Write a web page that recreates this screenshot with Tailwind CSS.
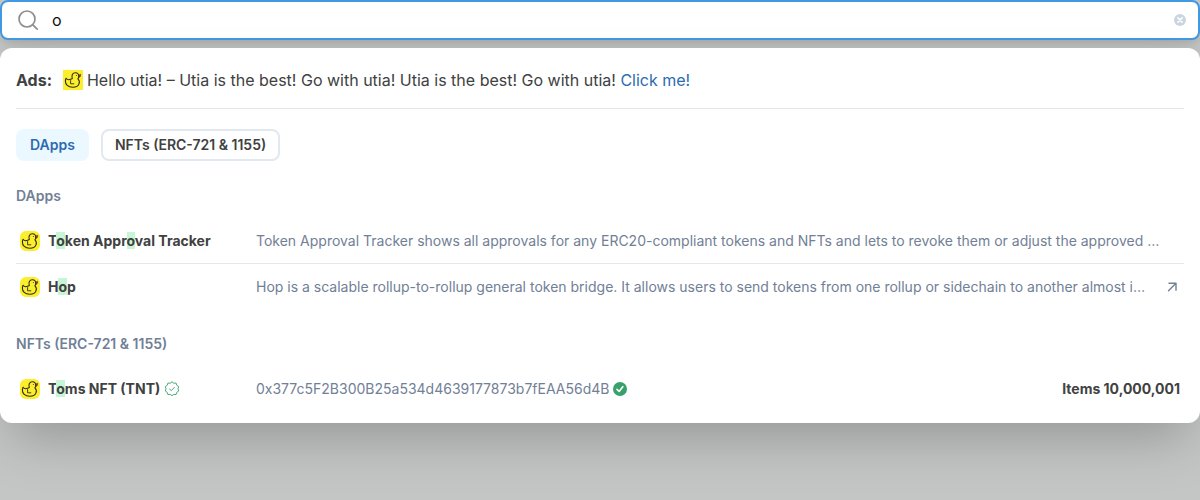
<!DOCTYPE html>
<html lang="en">
<head>
<meta charset="utf-8">
<meta name="viewport" content="width=device-width, initial-scale=1">
<title>Search</title>
<script src="https://cdn.jsdelivr.net/npm/@tailwindcss/browser@4"></script>
</head>
<body class="min-h-screen overflow-x-hidden bg-[#c4c6c5] font-['Inter',sans-serif] text-[#404141]">
<svg class="hidden" aria-hidden="true">
  <symbol id="duck" viewBox="0 0 20 20">
    <rect width="20" height="20" fill="#fbee2d"/>
    <path d="M15.6 5 17.8 4.2 17.4 6.6 15.8 7.6Z" fill="#b5442a" stroke="#5a2a18" stroke-width=".5"/>
    <path d="M9.3 8.6C8.2 5.4 9.6 2.8 12.3 2.800c2.500 0 3.900 1.900 3.500 4-.2 1-.6 1.500-.9 2 1.400 1.300 1.800 3.100 1.200 4.800-.8 2.400-3.200 3.600-6.300 3.600-4.900 0-7.500-2.700-7.400-6.100 0-1.100.3-2.100.7-2.800.7 1 1.400 1.500 2.500 1.500 1.200 0 2.400-.7 3.700-1.200Z" fill="none" stroke="#2d2a16" stroke-width="1.1" stroke-linejoin="round"/>
    <path d="M7.600 10.600v3.200h3.200" fill="none" stroke="#2d2a16" stroke-width=".9" stroke-linecap="round" stroke-linejoin="round"/>
    <circle cx="13.4" cy="5.600" r=".5" fill="#2d2a16"/>
  </symbol>
</svg>
<form role="search" class="flex h-10 items-center rounded-lg border-2 border-[#4299e1] bg-white pr-3 pl-4 shadow-lg">
  <svg class="size-5 shrink-0" viewBox="0 0 20 20" fill="none" stroke="#8c8d8d" stroke-width="1.7" stroke-linecap="round" aria-hidden="true"><circle cx="9" cy="9" r="8"/><path d="m14.8 14.8 4.4 4.4"/></svg>
  <input type="text" value="o" aria-label="Search" class="ml-3 min-w-0 flex-1 pl-0.5 text-base text-[#101112] outline-none">
  <button type="button" aria-label="Clear search" class="shrink-0"><svg class="size-3" viewBox="0 0 12 12"><circle cx="6" cy="6" r="6" fill="#cbd5e0"/><path d="m3.9 3.9 4.2 4.2m0-4.2L3.9 8.1" stroke="#fff" stroke-width="1.6" stroke-linecap="round"/></svg></button>
</form>
<main class="mt-2 rounded-xl bg-white px-4 pt-5 pb-[11px] shadow-2xl">
  <p class="flex items-center border-b border-[#e7e7e7] pb-4 text-base leading-6">
    <strong class="mr-[11px] font-bold">Ads:</strong>
    <svg class="mr-1 size-5 shrink-0" aria-hidden="true"><use href="#duck"/></svg>
    <span>Hello utia! – Utia is the best! Go with utia! Utia is the best! Go with utia! <a href="#" class="text-[#2b6cb0]">Click me!</a></span>
  </p>
  <nav class="mt-5 flex gap-3 text-sm font-semibold" aria-label="Result categories">
    <button type="button" class="h-8 rounded-lg bg-[#ebf8ff] px-3.5 text-[#2b6cb0]">DApps</button>
    <button type="button" class="h-8 rounded-lg border-2 border-[#e2e8f0] px-3">NFTs (ERC-721 &amp; 1155)</button>
  </nav>
  <section class="mt-[25px]">
    <h2 class="mb-3 text-sm leading-5 font-semibold text-[#718096]">DApps</h2>
    <ul class="text-sm">
      <li class="flex h-[46px] items-center border-b border-[#e7e7e7] px-1">
        <svg class="size-5 shrink-0 rounded-md" aria-hidden="true"><use href="#duck"/></svg>
        <a href="#" class="ml-2 w-[200px] shrink-0 truncate font-bold">T<mark class="bg-[#c6f6d5] text-inherit">o</mark>ken Appr<mark class="bg-[#c6f6d5] text-inherit">o</mark>val Tracker</a>
        <span class="ml-2 min-w-0 flex-1 truncate text-[#718096]">Token Approval Tracker shows all approvals for any ERC20-compliant tokens and NFTs and lets to revoke them or adjust the approved …</span>
      </li>
      <li class="flex h-[46px] items-center px-1">
        <svg class="size-5 shrink-0 rounded-md" aria-hidden="true"><use href="#duck"/></svg>
        <a href="#" class="ml-2 w-[200px] shrink-0 truncate font-bold">H<mark class="bg-[#c6f6d5] text-inherit">o</mark>p</a>
        <span class="ml-2 min-w-0 flex-1 truncate text-[#718096]">Hop is a scalable rollup-to-rollup general token bridge. It allows users to send tokens from one rollup or sidechain to another almost i…</span>
        <svg class="ml-2 size-4 shrink-0" viewBox="0 0 16 16" fill="none" stroke="#718096" stroke-width="1.4" stroke-linecap="round" stroke-linejoin="round" aria-hidden="true"><path d="M5 4.2h7v7M12 4.2l-7.5 7.5"/></svg>
      </li>
    </ul>
  </section>
  <section class="mt-6">
    <h2 class="mb-3 text-sm leading-5 font-semibold text-[#718096]">NFTs (ERC-721 &amp; 1155)</h2>
    <ul class="text-sm">
      <li class="flex h-[46px] items-center px-1">
        <svg class="size-5 shrink-0 rounded-md" aria-hidden="true"><use href="#duck"/></svg>
        <div class="ml-2 flex w-[200px] shrink-0 items-center gap-1">
          <a href="#" class="truncate font-bold">T<mark class="bg-[#c6f6d5] text-inherit">o</mark>ms NFT (TNT)</a>
          <svg class="size-4 shrink-0" viewBox="0 0 16 16" fill="none" stroke="#38a169" stroke-width=".9" stroke-linejoin="round" stroke-linecap="round" role="img" aria-label="Verified"><path d="m8 .9 1.8 1.3 2.3-.1.7 2.2 1.9 1.3L14 7.8l.7 2.2-1.9 1.3-.7 2.2-2.3-.1L8 14.7l-1.8-1.3-2.3.1-.7-2.2L1.3 10 2 7.8l-.7-2.2 1.9-1.3.7-2.2 2.3.1Z"/><path d="m5.6 8 1.7 1.6 3.1-3.2"/></svg>
        </div>
        <div class="ml-2 flex min-w-0 flex-1 items-center gap-1 text-[#718096]">
          <span class="truncate">0x377c5F2B300B25a534d4639177873b7fEAA56d4B</span>
          <svg class="size-3.5 shrink-0" viewBox="0 0 14 14" role="img" aria-label="Contract verified"><circle cx="7" cy="7" r="7" fill="#38a169"/><path d="m4 7.4 2.1 2L9.8 4.7" fill="none" stroke="#fff" stroke-width="1.6" stroke-linecap="round" stroke-linejoin="round"/></svg>
        </div>
        <span class="shrink-0 pl-2 font-bold">Items 10,000,001</span>
      </li>
    </ul>
  </section>
</main>
</body>
</html>
